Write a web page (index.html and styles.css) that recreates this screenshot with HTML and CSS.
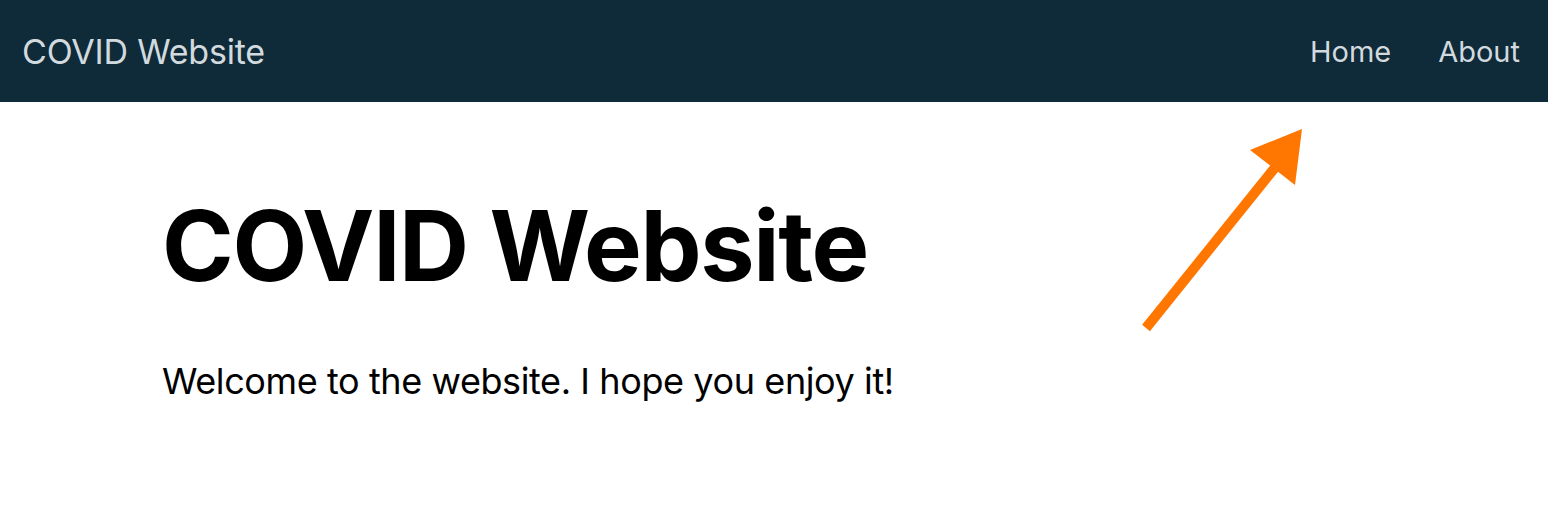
FILE: index.html
```html
<!DOCTYPE html>
<html lang="en">
<head>
<meta charset="utf-8">
<title>COVID Website</title>
<link rel="stylesheet" href="styles.css">
</head>
<body>
<header class="navbar">
  <a class="brand" href="#">COVID Website</a>
  <nav class="nav">
    <a class="nav-link" href="#">Home</a>
    <a class="nav-link" href="#">About</a>
  </nav>
</header>
<main class="content">
  <h1 class="title">COVID Website</h1>
  <p class="lead">Welcome to the website. I hope you enjoy it!</p>
</main>
<svg class="arrow" width="180" height="220" viewBox="0 0 180 220">
  <line x1="26" y1="218" x2="157" y2="55" stroke="#ff7600" stroke-width="10"/>
  <polygon points="182,19 130,40 175,75" fill="#ff7600"/>
</svg>
</body>
</html>
```
FILE: styles.css
```css
html, body {
  margin: 0;
  padding: 0;
  background: #ffffff;
  font-family: Inter, "Noto Sans", sans-serif;
}
body {
  position: relative;
  width: 1548px;
  height: 528px;
  overflow: hidden;
}
.navbar {
  height: 102px;
  background: #0f2a38;
  display: flex;
  align-items: center;
  justify-content: space-between;
  padding: 0 28px 0 22px;
  box-sizing: border-box;
}
.brand {
  color: #d2dadf;
  text-decoration: none;
  font-size: 34px;
  font-weight: 400;
  letter-spacing: -0.2px;
}
.nav {
  display: flex;
  gap: 47px;
}
.nav-link {
  color: #d2dadf;
  text-decoration: none;
  font-size: 29px;
}
.content {
  padding: 0 0 0 162px;
}
.title {
  margin: 86px 0 0 0;
  font-size: 97px;
  font-weight: 700;
  line-height: 1.2;
  letter-spacing: -1.3px;
  color: #000;
}
.lead {
  margin: 55px 0 0 0;
  font-size: 36px;
  letter-spacing: -0.4px;
  color: #000;
}
.arrow {
  position: absolute;
  left: 1120px;
  top: 110px;
  overflow: visible;
}
```
